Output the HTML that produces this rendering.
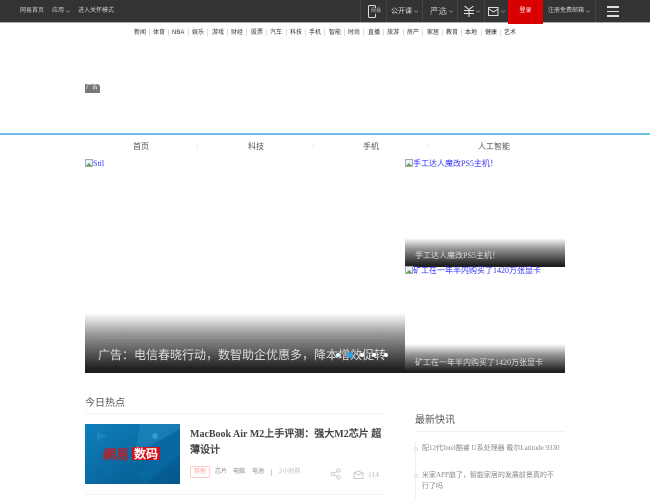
<!DOCTYPE html>
<html lang="zh"><head><meta charset="utf-8"><title>网易科技</title>
<style>
html,body{margin:0;padding:0;width:650px;height:500px;overflow:hidden;background:#fff}
body{position:relative;font-family:"Liberation Serif","WenQuanYi Zen Hei",serif}
.a{position:absolute;white-space:nowrap}
.s{font-family:"Liberation Sans","WenQuanYi Zen Hei",sans-serif}
#top{position:absolute;left:0;top:0;width:650px;height:22px;background:#333;border-bottom:1px solid #aaa}
#top .a{color:#ccc;font-size:6px;line-height:23px;top:0}
.div{position:absolute;top:0;width:1px;height:22px;background:#444}
#sub span{position:absolute;top:28.500px;font-size:6px;line-height:9px;color:#333;white-space:nowrap}
#sub i{position:absolute;top:29px;width:1px;height:7px;background:#ddd}
.nav{position:absolute;top:141px;font-size:8px;line-height:11px;color:#555;white-space:nowrap}
.sl{position:absolute;top:143px;width:1px;height:6px;background:#f0f0f0;transform:rotate(15deg)}
.broken{position:absolute;color:#33f;font-size:8px;line-height:10px;white-space:nowrap}
.broken svg{vertical-align:-1px;display:inline-block}
.grad{position:absolute;background:linear-gradient(#fff,#999 35%,#222 92%,#1c1c1c)}
.cap{position:absolute;color:#ddd;white-space:nowrap}
.dot{position:absolute;border-radius:50%;background:#fff}
</style></head><body>
<div id="top" class="s">
<span class="a" style="left:20px">网易首页</span>
<span class="a" style="left:52px">应用</span>
<svg class="a" style="left:66px;top:10px" width="4" height="3" viewBox="0 0 4 3" fill="none" stroke="#999" stroke-width=".6"><path d="M0 .5l2 2 2-2"/></svg>
<span class="a" style="left:78px">进入关怀模式</span>
<div class="div" style="left:360px"></div><div class="div" style="left:386px"></div><div class="div" style="left:422px"></div><div class="div" style="left:457px"></div><div class="div" style="left:484px"></div><div class="div" style="left:595px"></div>
<svg class="a" style="left:368px;top:5px" width="12" height="13" viewBox="0 0 12 13" fill="none" stroke="#ddd"><rect x=".5" y=".5" width="7" height="12" rx="1"/><rect x="3" y="3" width="9" height="6" fill="#333" stroke="none"/></svg>
<span class="a" style="left:371px;font-size:5px;color:#bbb">网易</span>
<span class="a" style="left:391px;font-size:7px;color:#ddd">公开课</span>
<svg class="a" style="left:414px;top:10px" width="4" height="3" viewBox="0 0 4 3" fill="none" stroke="#999" stroke-width=".6"><path d="M0 .5l2 2 2-2"/></svg>
<span class="a" style="left:430px;font-size:8.500px;color:#bbb">严选</span>
<svg class="a" style="left:449px;top:10px" width="4" height="3" viewBox="0 0 4 3" fill="none" stroke="#999" stroke-width=".6"><path d="M0 .5l2 2 2-2"/></svg>
<svg class="a" style="left:464px;top:6px" width="10" height="11" viewBox="0 0 10 11" fill="none" stroke="#ddd" stroke-width="1.100"><path d="M.5 0l4.500 3.500L9.500 0M0 4.500h10M0 7.500h10M5 4v7"/></svg>
<svg class="a" style="left:476px;top:10px" width="4" height="3" viewBox="0 0 4 3" fill="none" stroke="#999" stroke-width=".6"><path d="M0 .5l2 2 2-2"/></svg>
<svg class="a" style="left:488px;top:7px" width="11" height="9" viewBox="0 0 11 9" fill="none" stroke="#ddd"><rect x=".5" y=".5" width="9.500" height="8"/><path d="M1 2l4.500 3L10 2"/></svg>
<svg class="a" style="left:501px;top:10px" width="4" height="3" viewBox="0 0 4 3" fill="none" stroke="#999" stroke-width=".6"><path d="M0 .5l2 2 2-2"/></svg>
<div class="a" style="left:508px;top:0;width:35px;height:24px;background:#d80000;text-align:center;color:#fff;line-height:23px;font-size:6px">登录</div>
<span class="a" style="left:548px">注册免费邮箱</span>
<svg class="a" style="left:586px;top:10px" width="4" height="3" viewBox="0 0 4 3" fill="none" stroke="#999" stroke-width=".6"><path d="M0 .5l2 2 2-2"/></svg>
<div class="a" style="left:607px;top:6px;width:12px;height:1.500px;background:#ddd"></div>
<div class="a" style="left:607px;top:10.500px;width:12px;height:1.500px;background:#ddd"></div>
<div class="a" style="left:607px;top:15px;width:12px;height:1.500px;background:#ddd"></div>
</div>
<div id="sub" class="s">
<span style="left:134px">新闻</span><i style="left:149px"></i>
<span style="left:153px">体育</span><i style="left:168px"></i>
<span style="left:172px">NBA</span><i style="left:188px"></i>
<span style="left:192px">娱乐</span><i style="left:207px"></i>
<span style="left:212px">游戏</span><i style="left:227px"></i>
<span style="left:231px">财经</span><i style="left:246px"></i>
<span style="left:251px">股票</span><i style="left:266px"></i>
<span style="left:270px">汽车</span><i style="left:286px"></i>
<span style="left:290px">科技</span><i style="left:305px"></i>
<span style="left:309px">手机</span><i style="left:324px"></i>
<span style="left:329px">智能</span><i style="left:344px"></i>
<span style="left:348px">时尚</span><i style="left:363px"></i>
<span style="left:368px">直播</span><i style="left:383px"></i>
<span style="left:387px">旅游</span><i style="left:403px"></i>
<span style="left:407px">房产</span><i style="left:422px"></i>
<span style="left:427px">家居</span><i style="left:442px"></i>
<span style="left:446px">教育</span><i style="left:461px"></i>
<span style="left:465px">本地</span><i style="left:481px"></i>
<span style="left:485px">健康</span><i style="left:500px"></i>
<span style="left:504px">艺术</span>
</div>
<div class="a s" style="left:85px;top:84px;width:15px;height:9px;background:#777;border-radius:0 3px 0 0;color:#eee;font-size:6px;line-height:9px;text-indent:1px">广告</div>
<div class="a" style="left:0;top:133px;width:650px;height:2px;background:#6dbde8"></div>
<span class="nav" style="left:133px">首页</span><span class="nav" style="left:248px">科技</span><span class="nav" style="left:363px">手机</span><span class="nav" style="left:478px">人工智能</span>
<div class="sl" style="left:197px"></div><div class="sl" style="left:312px"></div><div class="sl" style="left:427px"></div>

<div class="broken" style="left:85px;top:159px"><svg width="8" height="8" viewBox="0 0 8 8"><rect x=".5" y=".5" width="7" height="7" fill="#eef" stroke="#aaa"/><path d="M1 7l3-3 3 3z" fill="#5a5"/></svg>Stil</div>
<div class="broken" style="left:405px;top:159px"><svg width="8" height="8" viewBox="0 0 8 8"><rect x=".5" y=".5" width="7" height="7" fill="#eef" stroke="#aaa"/><path d="M1 7l3-3 3 3z" fill="#5a5"/></svg>手工达人魔改PS5主机！</div>
<div class="broken" style="left:405px;top:266px;z-index:2"><svg width="8" height="8" viewBox="0 0 8 8"><rect x=".5" y=".5" width="7" height="7" fill="#eef" stroke="#aaa"/><path d="M1 7l3-3 3 3z" fill="#5a5"/></svg>矿工在一年半内购买了1420万张显卡</div>

<div class="grad" style="left:85px;top:313px;width:320px;height:60px"></div>
<div class="a" style="left:98px;top:337px;width:290px;height:1px;background:rgba(255,255,255,.08)"></div>
<div class="cap" style="left:98px;top:347px;font-size:12px;line-height:16px">广告：电信春晓行动，数智助企优惠多，降本增效促转</div>
<div class="dot" style="left:336px;top:353px;width:4px;height:4px;background:#dff"></div>
<div class="dot" style="left:347px;top:352px;width:6px;height:6px;background:#2aa3e8"></div>
<div class="dot" style="left:360px;top:353px;width:4px;height:4px"></div>
<div class="dot" style="left:372px;top:353px;width:4px;height:4px"></div>
<div class="dot" style="left:384px;top:353px;width:4px;height:4px"></div>

<div class="grad" style="left:405px;top:238px;width:160px;height:29px"></div>
<div class="cap" style="left:415px;top:250px;font-size:8px;line-height:11px">手工达人魔改PS5主机！</div>
<div class="grad" style="left:405px;top:344px;width:160px;height:29px"></div>
<div class="cap" style="left:415px;top:357px;font-size:8px;line-height:11px">矿工在一年半内购买了1420万张显卡</div>

<div class="a" style="left:85px;top:397px;font-size:10px;line-height:14px;color:#555">今日热点</div>
<div class="a" style="left:85px;top:413px;width:300px;height:1px;background:#f2f2f2"></div>

<svg class="a" style="left:85px;top:424px" width="95" height="60" viewBox="0 0 95 60">
<defs><linearGradient id="g" x1="0" y1="0" x2="1" y2="1"><stop offset="0" stop-color="#0f80bc"/><stop offset="1" stop-color="#05568a"/></linearGradient></defs>
<rect width="95" height="60" fill="url(#g)"/>
<path d="M12 8L22 12 12 17z M55 0H95V5L50 30z" fill="#3aa6d8" opacity=".3"/>
<path d="M50 50L95 12V30L60 60z" fill="#0a6ca6" opacity=".6"/>
<circle cx="70" cy="12" r="3" fill="#2a9fd8"/>
<rect x="47" y="23" width="28" height="13" fill="#d3101c"/>
<text x="18" y="35" font-size="13" fill="#b8202c" font-family="WenQuanYi Zen Hei,serif" font-weight="700">網易</text>
<text x="49" y="34" font-size="12" fill="#fff" font-family="WenQuanYi Zen Hei,serif" font-weight="700">数码</text>
</svg>

<div class="a" style="left:190px;top:426.500px;width:195px;white-space:normal;font-size:10px;line-height:16px;font-weight:700;color:#444">MacBook Air M2上手评测：强大M2芯片 超薄设计</div>
<div class="a s" style="left:190px;top:466px;width:18px;height:10px;border:1px solid #fcc;border-radius:2px;color:#f99;font-size:6px;line-height:10px;text-align:center">其他</div>
<span class="a s" style="left:215px;top:468px;font-size:6px;line-height:9px;color:#888">芯片</span>
<span class="a s" style="left:233px;top:468px;font-size:6px;line-height:9px;color:#888">电脑</span>
<span class="a s" style="left:252px;top:468px;font-size:6px;line-height:9px;color:#888">电池</span>
<div class="a" style="left:271px;top:469px;width:1px;height:7px;background:#ccc"></div>
<span class="a s" style="left:279px;top:468px;font-size:6px;line-height:9px;color:#bbb">2小时前</span>
<svg class="a" style="left:330px;top:468px" width="11" height="12" viewBox="0 0 11 12" fill="none" stroke="#ccc"><circle cx="2.500" cy="6" r="1.700"/><circle cx="8.500" cy="2.500" r="1.700"/><circle cx="8.500" cy="9.500" r="1.700"/><path d="M4 5l3-1.500M4 7l3 1.500"/></svg>
<svg class="a" style="left:353px;top:470px" width="11" height="10" viewBox="0 0 11 10" fill="none" stroke="#ccc"><path d="M1 3l4.500-2 4.500 2-4.500 2zM1 3v5.500h9V3"/></svg>
<span class="a" style="left:368px;top:469px;font-size:7.500px;line-height:11px;color:#bbb">114</span>
<div class="a" style="left:85px;top:494px;width:300px;height:1px;background:#f2f2f2"></div>

<div class="a" style="left:415px;top:413.500px;font-size:10px;line-height:14px;color:#555">最新快讯</div>
<div class="a" style="left:415px;top:431px;width:150px;height:1px;background:#f2f2f2"></div>
<div class="a" style="left:415px;top:441px;width:1px;height:59px;background:#f2f2f2"></div>
<div class="a" style="left:414px;top:447px;width:1.500px;height:1.500px;border:1px solid #ddd;border-radius:50%;background:#fff"></div>
<div class="a" style="left:414px;top:474px;width:1.500px;height:1.500px;border:1px solid #ddd;border-radius:50%;background:#fff"></div>
<div class="a" style="left:422px;top:442px;font-size:7px;line-height:12px;color:#888">配12代Intel酷睿 U系处理器 戴尔Latitude 9330</div>
<div class="a" style="left:422px;top:470px;width:136px;white-space:normal;font-size:7px;line-height:11px;color:#888">米家APP崩了，智能家居的发展前景真的不行了吗</div>
</body></html>
